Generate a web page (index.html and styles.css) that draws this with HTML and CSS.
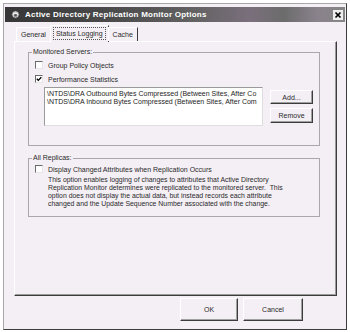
FILE: index.html
```html
<!DOCTYPE html>
<html lang="en">
<head>
  <meta charset="UTF-8">
  <title>Active Directory Replication Monitor Options</title>
  <link rel="stylesheet" href="styles.css">
</head>
<body>

<div class="dialog">
  <div class="titlebar">
    <svg class="app-icon" viewBox="0 0 10 10">
      <circle cx="5" cy="5" r="4.2" fill="#c8c8c8" stroke="#2a2a2a" stroke-width="0.8"/>
      <path d="M2.2 5 Q5 1.5 7.8 5" fill="none" stroke="#fff" stroke-width="1.2"/>
      <rect x="3.6" y="4.6" width="2.8" height="2.6" fill="#555"/>
    </svg>
    <span class="title">Active Directory Replication Monitor Options</span>
    <span class="close">
      <svg viewBox="0 0 10 10"><path d="M2.5 2.5 L7.5 7.5 M7.5 2.5 L2.5 7.5" stroke="#000" stroke-width="1.7"/></svg>
    </span>
  </div>

  <div class="tabs">
    <span class="tab">General</span>
    <span class="tab active"><span class="focus">Status Logging</span></span>
    <span class="tab">Cache</span>
  </div>

  <div class="panel">
    <fieldset class="group servers">
      <legend>Monitored Servers:</legend>
      <label class="check"><span class="box"></span>Group Policy Objects</label>
      <label class="check second"><span class="box"><svg viewBox="0 0 6 6"><polyline points="0.8,2.8 2.3,4.4 5.3,1.2" fill="none" stroke="#000" stroke-width="1.3"/></svg></span>Performance Statistics</label>
      <div class="counters">
        <div class="list">
          <div>\NTDS\DRA Outbound Bytes Compressed (Between Sites, After Co</div>
          <div>\NTDS\DRA Inbound Bytes Compressed (Between Sites, After Com</div>
        </div>
        <div class="side-buttons">
          <button class="btn add">Add...</button>
          <button class="btn remove">Remove</button>
        </div>
      </div>
    </fieldset>

    <fieldset class="group replicas">
      <legend>All Replicas:</legend>
      <label class="check"><span class="box"></span>Display Changed Attributes when Replication Occurs</label>
      <p class="note">This option enables logging of changes to attributes that Active Directory<br>Replication Monitor determines were replicated to the monitored server.&nbsp; This<br>option does not display the actual data, but instead records each attribute<br>changed and the Update Sequence Number associated with the change.</p>
    </fieldset>
  </div>

  <div class="footer">
    <button class="btn ok">OK</button>
    <button class="btn cancel">Cancel</button>
  </div>
</div>

</body>
</html>
```

FILE: styles.css
```css
body {
  margin: 0;
  background: #ffffff;
  font-family: "Liberation Sans", Arial, sans-serif;
  font-size: 7px;
  color: #2a2a2a;
}

/* ventana principal */
.dialog {
  box-sizing: border-box;
  width: 344px;
  height: 327px;
  margin: 3px 0 0 3px;
  padding: 3px 1px 0;
  background: #f4eff5;
  border: 1px solid;
  border-color: #a8a8a8 #3c3c3c #3c3c3c #a8a8a8;
  display: flex;
  flex-direction: column;
}

.titlebar {
  height: 15px;
  display: flex;
  align-items: center;
  background: linear-gradient(to right, #363636 0%, #4a4a4a 30%, #626262 55%, #7a6f7c 72%, #6c6c6c 82%, #8a828c 92%, #868686 100%);
  color: #fff;
  font-weight: bold;
  font-size: 8px;
}

.app-icon {
  width: 9px;
  height: 9px;
  margin: 0 5px 0 6px;
}

.title {
  flex: 1;
  letter-spacing: 0.25px;
}

.close {
  width: 10px;
  height: 10px;
  margin-right: 2px;
  background: #eeeeee;
  display: flex;
}

.close svg {
  width: 10px;
  height: 10px;
}

/* pestañas */
.tabs {
  display: flex;
  align-items: flex-end;
  height: 16px;
  margin: 3px 0 0 11px;
  position: relative;
  z-index: 1;
}

.tab {
  box-sizing: border-box;
  height: 14px;
  line-height: 13px;
  padding: 0 4px;
  border: 1px solid;
  border-color: #fff #3c3c3c transparent #fff;
  border-bottom: 0;
}

.tab.active {
  height: 17px;
  margin: 0 -1px -1px;
  padding: 2px 3px 0;
  background: #f4eff5;
}

.focus {
  display: block;
  line-height: 11px;
  padding: 0 2px;
  outline: 1px dotted #555;
}

/* panel de la pestaña */
.panel {
  box-sizing: border-box;
  height: 255px;
  margin: 0 8px 0 9px;
  padding: 6px 0 0 13px;
  border: 1px solid;
  border-color: #fff #3c3c3c #3c3c3c #fff;
  box-shadow: inset -1px -1px 0 #9a9a9a;
}

.group {
  box-sizing: border-box;
  width: 292px;
  margin: 0;
  padding: 5px 6px 0;
  border: 1px solid #aaa6ab;
  min-width: 0;
}

.group legend {
  margin-left: -3px;
  padding: 0 1px;
  line-height: 8px;
  background: #f4eff5;
}

.servers {
  height: 98px;
}

.replicas {
  height: 63px;
  margin-top: 8px;
  padding-top: 3px;
}

.check {
  display: flex;
  align-items: center;
  height: 8px;
}

.check.second {
  margin-top: 6px;
}

.box {
  box-sizing: border-box;
  width: 8px;
  height: 8px;
  margin-right: 5px;
  background: #fff;
  border: 1px solid;
  border-color: #6a6a6a #e6e6e6 #e6e6e6 #6a6a6a;
  display: flex;
}

.box svg {
  width: 6px;
  height: 6px;
}

.counters {
  display: flex;
  margin: 4px 0 0 9px;
}

.list {
  box-sizing: border-box;
  width: 219px;
  height: 39px;
  padding: 2px 2px 0;
  background: #fff;
  border: 1px solid;
  border-color: #9a9a9a #dedede #dedede #9a9a9a;
  line-height: 8px;
  white-space: nowrap;
  color: #1e1e1e;
}

.side-buttons {
  display: flex;
  flex-direction: column;
  gap: 4px;
  margin: 3px 0 0 7px;
}

.btn {
  box-sizing: border-box;
  font-family: "Liberation Sans", Arial, sans-serif;
  font-size: 7px;
  color: #2a2a2a;
  background: #f4eff5;
  border: 1px solid;
  border-color: #fff #3c3c3c #3c3c3c #fff;
  box-shadow: inset -1px -1px 0 #a0a0a0;
  padding: 0;
}

.add {
  width: 43px;
  height: 14px;
}

.remove {
  width: 43px;
  height: 15px;
}

.note {
  margin: 3px 0 0 13px;
  font-size: 6.9px;
  line-height: 8px;
}

.footer {
  display: flex;
  justify-content: flex-end;
  gap: 5px;
  margin-top: 2px;
  padding-right: 42px;
}

.ok {
  width: 58px;
  height: 23px;
}

.cancel {
  width: 60px;
  height: 23px;
}
```
